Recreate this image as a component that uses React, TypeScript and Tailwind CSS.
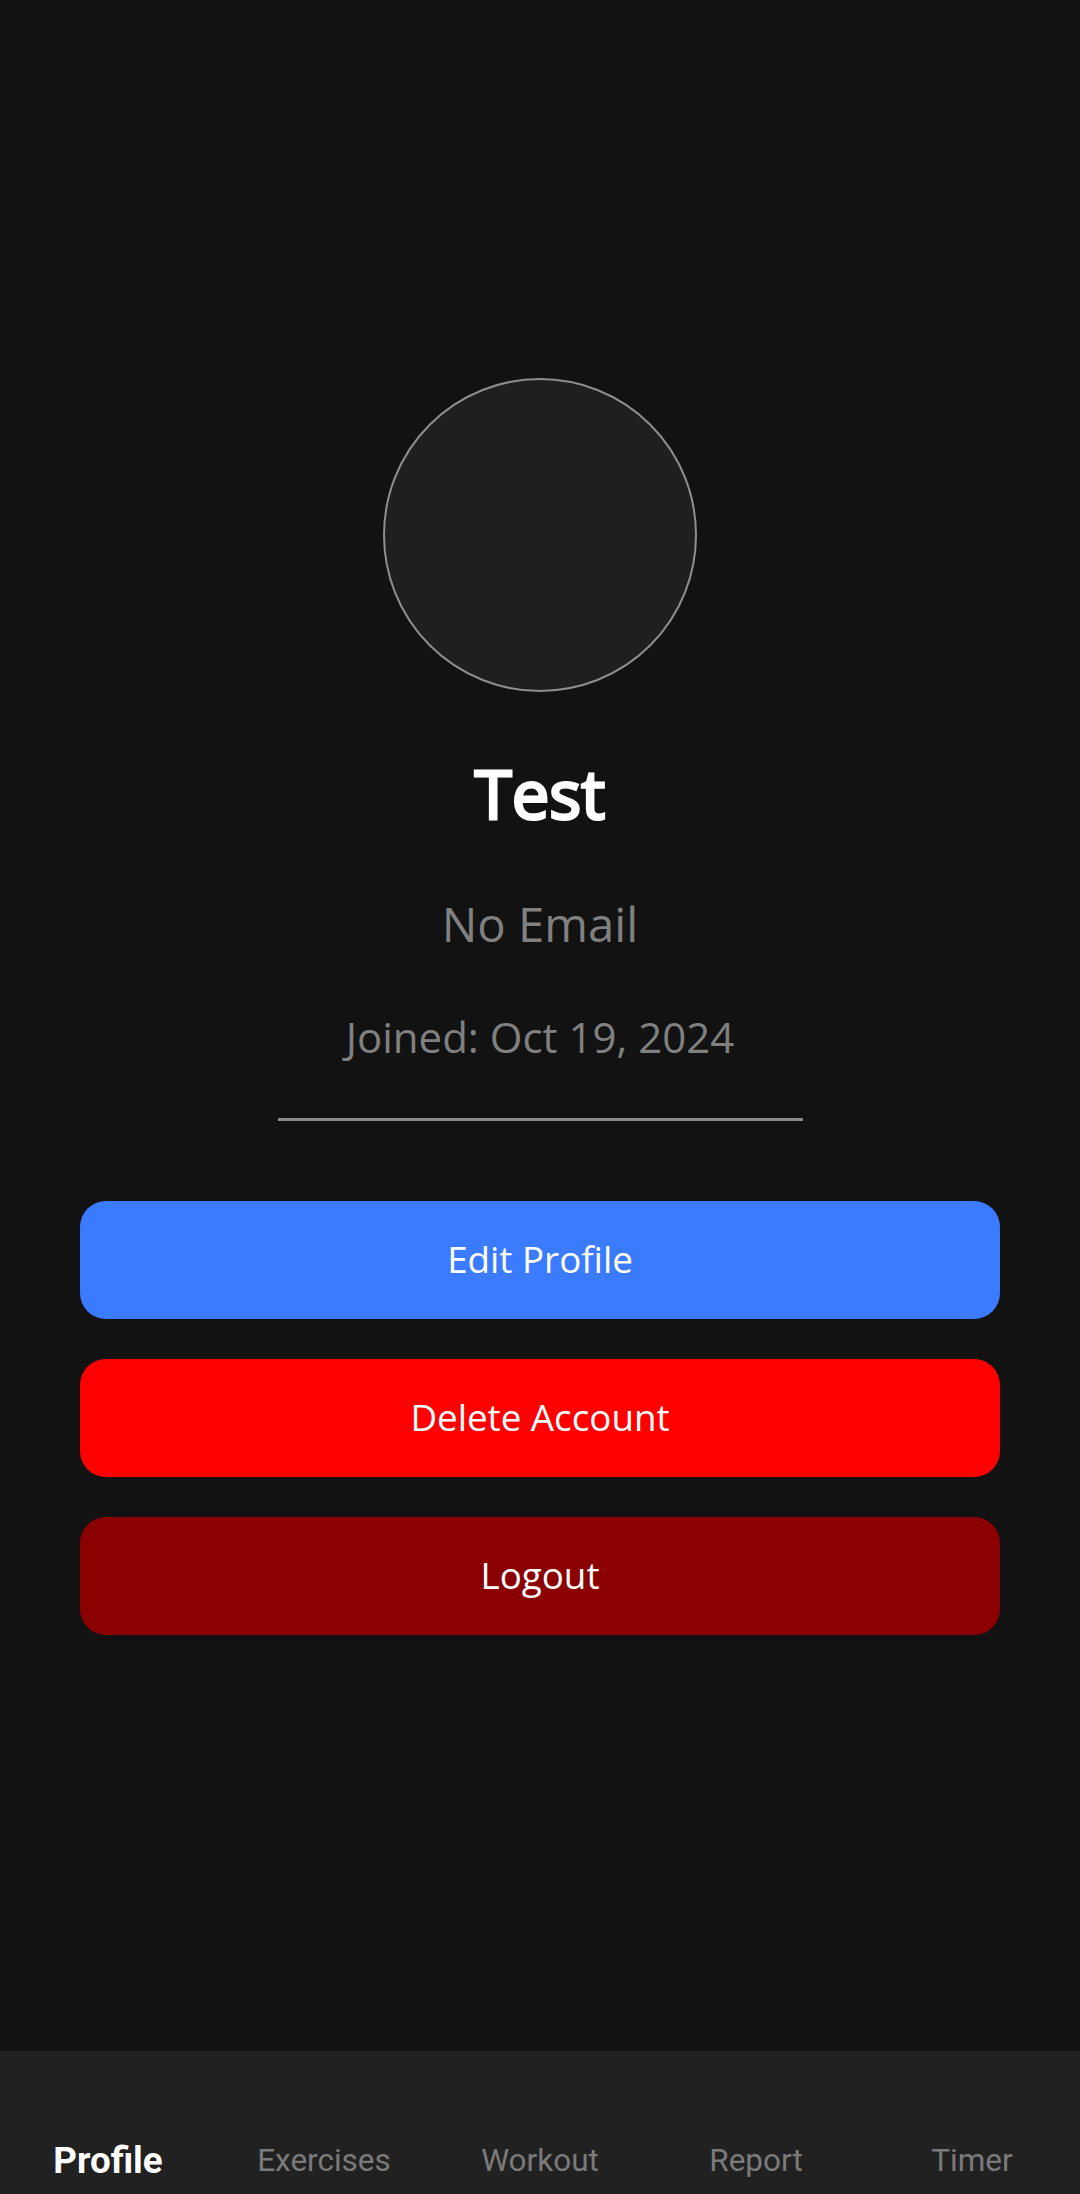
import React from "react";

const openSans = { fontFamily: '"Open Sans", "Noto Sans", sans-serif' };

export default function App() {
  const tabs = ["Profile", "Exercises", "Workout", "Report", "Timer"];
  return (
    <div className="flex h-[2194px] w-[1080px] flex-col bg-[#121212]" style={openSans}>
      <main className="flex flex-1 flex-col items-center pt-[378px]">
        <div className="h-[314px] w-[314px] rounded-full border-[2.5px] border-[#8e8e8e] bg-[#1f1f1f]" />
        <h1 className="mt-[51px] text-[67px] font-normal leading-[100px] text-white [-webkit-text-stroke:3px_white]">
          Test
        </h1>
        <p className="mt-[49px] text-[47.25px] leading-[64px] text-[#808080]">No Email</p>
        <p className="mt-[52px] text-[42px] leading-[57px] text-[#808080]">Joined: Oct 19, 2024</p>
        <div className="mt-[53px] h-[3px] w-[525px] bg-[#8a8a8a]" />
        <div className="mt-[80px] flex w-full flex-col gap-[40px] px-[80px]">
          <button className="flex h-[118px] items-center justify-center rounded-[26px] bg-[#3b7bff] text-[36.75px] text-white">
            Edit Profile
          </button>
          <button className="flex h-[118px] items-center justify-center rounded-[26px] bg-[#ff0000] text-[36.75px] text-white">
            Delete Account
          </button>
          <button className="flex h-[118px] items-center justify-center rounded-[26px] bg-[#8b0000] text-[36.75px] text-white">
            Logout
          </button>
        </div>
      </main>
      <nav
        className="grid h-[143px] grid-cols-5 items-end bg-[#212121] pb-[13px]"
        style={{ fontFamily: 'Roboto, "Liberation Sans", sans-serif' }}
      >
        {tabs.map((t, i) => (
          <div
            key={t}
            className={
              i === 0
                ? "text-center text-[36.75px] font-bold leading-[40px] text-white"
                : "text-center text-[31.5px] leading-[40px] text-[#7a7a7a]"
            }
          >
            {t}
          </div>
        ))}
      </nav>
    </div>
  );
}
